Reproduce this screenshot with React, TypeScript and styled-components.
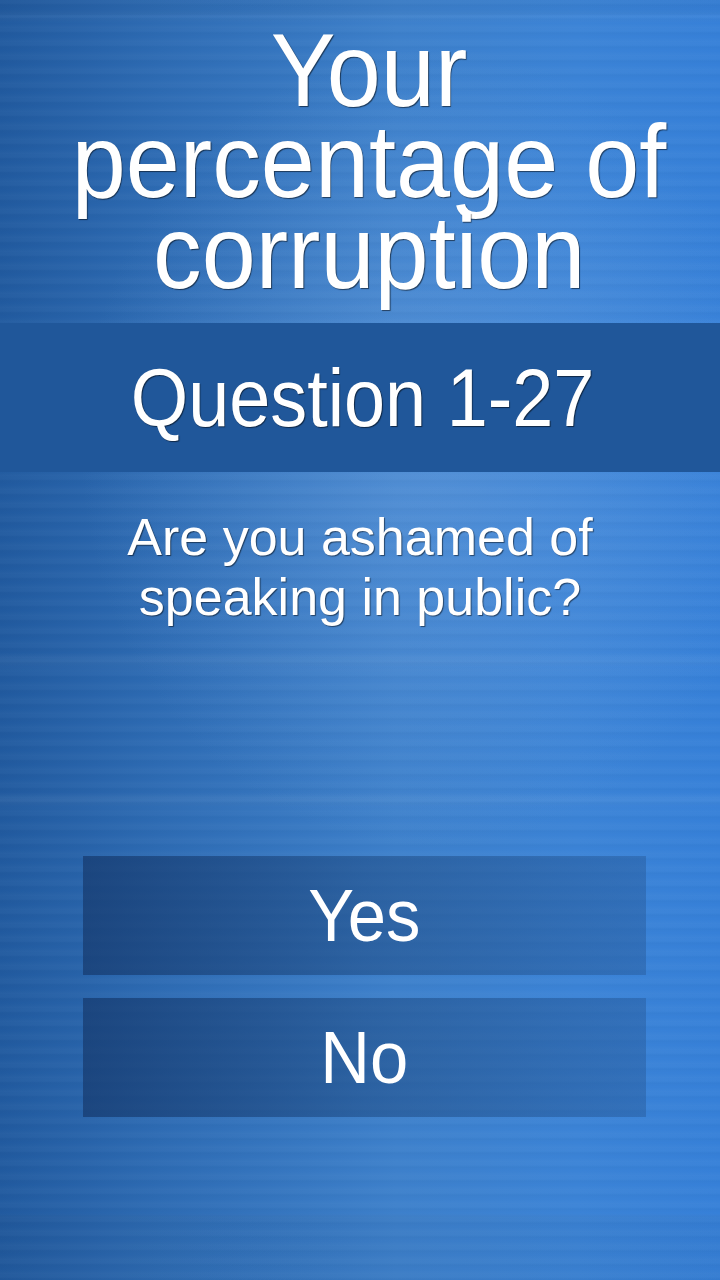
import React from 'react';
import styled, { createGlobalStyle } from 'styled-components';

const GlobalStyle = createGlobalStyle`
  html, body {
    margin: 0;
    padding: 0;
  }
  body {
    font-family: 'Liberation Sans', Arial, sans-serif;
  }
`;

const Screen = styled.div`
  width: 720px;
  height: 1280px;
  overflow: hidden;
  display: flex;
  flex-direction: column;
  color: #ffffff;
  background:
    linear-gradient(
      180deg,
      rgba(0, 0, 0, 0.03) 0px,
      rgba(0, 0, 0, 0.03) 14px,
      rgba(255, 255, 255, 0.03) 16px,
      rgba(255, 255, 255, 0) 24px,
      rgba(255, 255, 255, 0) 652px,
      rgba(255, 255, 255, 0.04) 662px,
      rgba(255, 255, 255, 0) 672px,
      rgba(255, 255, 255, 0) 792px,
      rgba(255, 255, 255, 0.045) 800px,
      rgba(255, 255, 255, 0) 810px,
      rgba(255, 255, 255, 0) 1214px,
      rgba(0, 0, 0, 0.03) 1216px,
      rgba(0, 0, 0, 0.03) 1280px
    ),
    repeating-linear-gradient(
      180deg,
      rgba(255, 255, 255, 0.025) 0px,
      rgba(255, 255, 255, 0.025) 3px,
      rgba(0, 0, 0, 0.015) 5px,
      rgba(255, 255, 255, 0) 9px,
      rgba(255, 255, 255, 0.03) 14px
    ),
    radial-gradient(ellipse 70% 45% at 60% 35%, rgba(120, 170, 230, 0.35), rgba(120, 170, 230, 0) 70%),
    linear-gradient(90deg, #215a9f 0%, #2d6bb3 22%, #3d80cb 55%, #3b83d6 80%, #3680d8 100%);
`;

const Narrow = styled.span<{ $scale: number }>`
  display: inline-block;
  white-space: nowrap;
  transform: scaleX(${({ $scale }) => $scale});
`;

const Title = styled.h1`
  margin: 0;
  padding: 25px 0 0 18px;
  font-size: 104px;
  font-weight: 400;
  line-height: 91px;
  text-align: center;
  text-shadow: 1px 1px 1px rgba(0, 0, 0, 0.55);
`;

const Band = styled.div`
  margin-top: 25px;
  height: 149px;
  display: flex;
  align-items: center;
  justify-content: center;
  padding-left: 6px;
  background: #20579a;
  font-size: 82px;
  text-shadow: 1px 1px 1px rgba(0, 0, 0, 0.55);
`;

const Prompt = styled.p`
  margin: 35px 0 0;
  font-size: 52px;
  line-height: 60px;
  text-align: center;
  text-shadow: 1px 1px 1px rgba(0, 0, 0, 0.5);
`;

const Answers = styled.div`
  margin-top: 229px;
  padding: 0 74px 0 83px;
  display: flex;
  flex-direction: column;
  gap: 23px;
`;

const AnswerButton = styled.button`
  height: 119px;
  border: none;
  border-radius: 0;
  padding: 0;
  cursor: pointer;
  color: #ffffff;
  font-family: 'Liberation Sans', Arial, sans-serif;
  font-size: 74px;
  background: linear-gradient(90deg, rgba(22, 58, 110, 0.72) 0%, rgba(30, 74, 130, 0.55) 50%, rgba(38, 88, 150, 0.45) 100%);
`;

export default function App() {
  return (
    <>
      <GlobalStyle />
      <Screen>
        <Title>
          <Narrow $scale={0.935}>Your</Narrow>
          <br />
          <Narrow $scale={0.935}>percentage of</Narrow>
          <br />
          <Narrow $scale={0.935}>corruption</Narrow>
        </Title>
        <Band>
          <Narrow $scale={0.9}>Question 1-27</Narrow>
        </Band>
        <Prompt>
          Are you ashamed of
          <br />
          speaking in public?
        </Prompt>
        <Answers>
          <AnswerButton>
            <Narrow $scale={0.93}>Yes</Narrow>
          </AnswerButton>
          <AnswerButton>
            <Narrow $scale={0.93}>No</Narrow>
          </AnswerButton>
        </Answers>
      </Screen>
    </>
  );
}
